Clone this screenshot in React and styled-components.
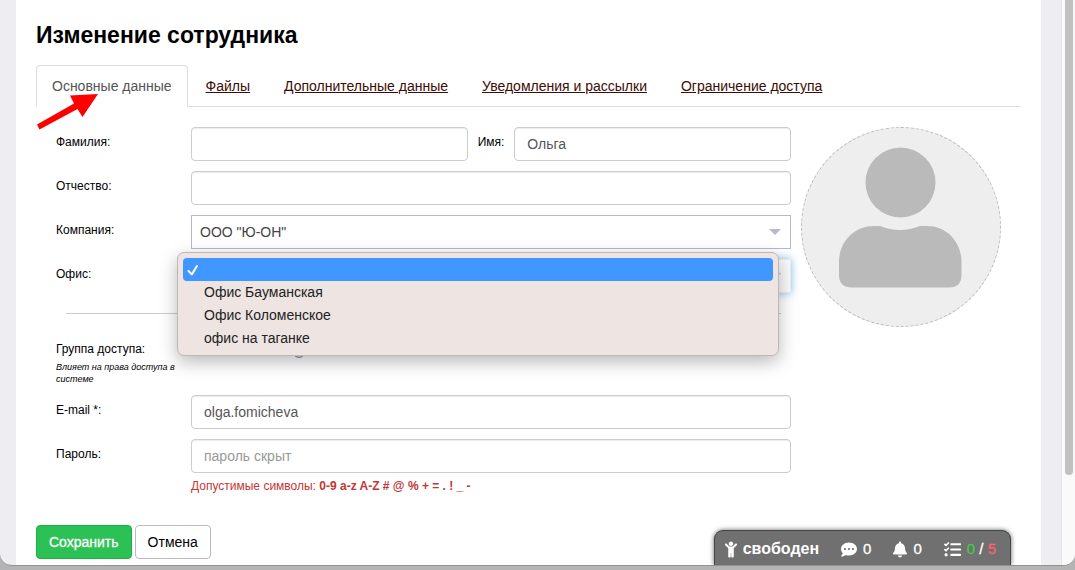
import React from 'react'
import styled, { createGlobalStyle } from 'styled-components'
import { FaChild, FaCommentDots, FaBell, FaTasks } from 'react-icons/fa'

const GlobalStyle = createGlobalStyle`
  * {
    box-sizing: border-box;
  }

  body {
    margin: 0;
    background: #b4b4b4;
    color: #000;
    font-family: "Liberation Sans", Arial, sans-serif;
    font-size: 14px;
    line-height: 20px;
  }

  button, input, select {
    font: inherit;
  }
`

const Desktop = styled.div`
  display: flex;
  min-height: 100vh;
  padding-bottom: 4px;
`

const Window = styled.div`
  position: relative;
  display: flex;
  flex: 1;
  overflow: hidden;
  border-bottom: 1px solid #929292;
  border-radius: 0 0 12px 12px;
  background: #eeedf2;
`

const Page = styled.main`
  flex: 1;
  min-width: 0;
  margin: 0 20px 0 16px;
  padding: 20px 20px 6px;
  background: #fff;
`

const ScrollTrack = styled.div`
  display: flex;
  width: 14px;
  padding-left: 3px;
  border-left: 1px solid #e4e4e6;
  background: #fafafa;
`

const ScrollThumb = styled.div`
  width: 8px;
  height: 84%;
  border-radius: 0 0 4px 4px;
  background: #c1c1c1;
`

const Title = styled.h1`
  margin: 0 0 15px;
  font-size: 23px;
  line-height: 30px;
`

const Tabs = styled.nav`
  display: flex;
  gap: 2px;
  border-bottom: 1px solid #ddd;
`

const Tab = styled.a`
  margin-bottom: -1px;
  padding: 10px 15px;
  border: 1px solid ${props => props.$active ? '#ddd' : 'transparent'};
  border-bottom-color: ${props => props.$active ? '#fff' : 'transparent'};
  border-radius: 4px 4px 0 0;
  color: ${props => props.$active ? '#555' : '#3c0d05'};
  text-decoration: ${props => props.$active ? 'none' : 'underline'};
`

const TabPointer = styled.svg`
  position: absolute;
  top: 90px;
  left: 36px;
  width: 64px;
  height: 40px;
  pointer-events: none;
`

const FormBody = styled.div`
  display: flex;
  align-items: flex-start;
  gap: 10px;
  padding: 20px 20px 0;
`

const Fields = styled.div`
  display: flex;
  flex: 1;
  flex-direction: column;
  gap: 10px;
  min-width: 0;
`

const Row = styled.div`
  display: grid;
  grid-template-columns: 120px 1fr;
  column-gap: 15px;
`

const Label = styled.label`
  padding-top: 5px;
  font-size: 12px;
`

const Control = styled.div`
  position: relative;
  display: flex;
  gap: 10px;
  min-width: 0;
`

const Input = styled.input`
  flex: 1;
  width: 100%;
  min-width: 0;
  height: 34px;
  padding: 6px 12px;
  border: 1px solid #ccc;
  border-radius: 4px;
  background: #fff;
  box-shadow: inset 0 1px 1px rgba(0, 0, 0, 0.075);
  color: #555;

  &::placeholder {
    color: #999;
    opacity: 1;
  }
`

const Select = styled.select`
  flex: 1;
  height: 34px;
  padding: 0 30px 0 8px;
  appearance: none;
  border: 1px solid ${props => props.$focused ? '#eee' : '#b9b7cb'};
  border-radius: 0;
  outline: 0;
  background: ${props => props.$focused ? '#fafafa' : '#fff'};
  box-shadow: ${props => props.$focused ? '0 0 8px rgba(102, 175, 233, 0.8)' : 'none'};
  color: #444;
`

const Caret = styled.svg`
  position: absolute;
  top: 14px;
  right: 10px;
  width: 12px;
  height: 6px;
  fill: #bcb9cd;
  pointer-events: none;
`

const Menu = styled.ul`
  position: absolute;
  z-index: 2;
  top: -7px;
  right: 12px;
  left: -14px;
  margin: 0;
  padding: 5px;
  list-style: none;
  border: 1px solid #bdb8b8;
  border-radius: 7px;
  background: #eee4e2;
  box-shadow: 0 6px 18px rgba(0, 0, 0, 0.28);
`

const MenuItem = styled.li`
  height: 23px;
  padding-left: 21px;
  border-radius: 4px;
  background: ${props => props.$selected ? '#4097ff' : 'transparent'};
  color: #222;
  line-height: 23px;
`

const CheckMark = styled.svg`
  display: block;
  width: 12px;
  height: 23px;
  margin-left: -17px;
`

const Divider = styled.hr`
  width: calc(100% - 20px);
  margin: 10px;
  border: 0;
  border-top: 1px solid #ccc;
`

const GroupLabel = styled.div`
  padding-top: 5px;
  font-size: 12px;
`

const Hint = styled.em`
  display: block;
  font-size: 9px;
  line-height: 12px;
  padding-top: 2px;
`

const HelpIcon = styled.svg`
  width: 14px;
  height: 14px;
  margin: 10px 0 0 101px;
`

const ErrorText = styled.p`
  grid-column: 2;
  margin: 3px 0 0;
  color: #c43535;
  font-size: 12px;
`

const Actions = styled.div`
  display: flex;
  gap: 3px;
  margin-top: 29px;
`

const Button = styled.button`
  height: 34px;
  padding: 0 12px;
  border: 1px solid ${props => props.$primary ? '#1fb148' : '#bbb'};
  border-radius: 4px;
  background: ${props => props.$primary ? '#2bc155' : '#fff'};
  color: ${props => props.$primary ? '#fff' : '#000'};
  -webkit-text-stroke: ${props => props.$primary ? '0.3px #fff' : '0'};
`

const Avatar = styled.div`
  flex: none;
  width: 200px;
  height: 200px;
  border: 1px dashed #b9b9b9;
  border-radius: 50%;
  background: #eee;

  svg {
    display: block;
  }
`

const StatusBar = styled.div`
  position: absolute;
  right: 64px;
  bottom: 0;
  display: flex;
  align-items: center;
  gap: 22px;
  height: 35px;
  padding: 2px 14px 0 10px;
  border: 1px solid #444;
  border-bottom: 0;
  border-radius: 9px 9px 0 0;
  background: #707070;
  box-shadow: 0 0 5px rgba(0, 0, 0, 0.6);
`

const StatusItem = styled.a`
  display: flex;
  align-items: center;
  gap: 6px;
  color: #fff;
  font-weight: ${props => props.$bold ? 'bold' : 'normal'};
  font-size: ${props => props.$bold ? '16px' : '15px'};
  text-decoration: none;

  svg {
    width: ${props => props.$icon}px;
    height: 17px;
  }

  b {
    font-weight: normal;
    -webkit-text-stroke: 0.3px currentColor;
  }
`

const Count = styled.span`
  color: ${props => props.color};
`

const tabs = [
  'Основные данные',
  'Файлы',
  'Дополнительные данные',
  'Уведомления и рассылки',
  'Ограничение доступа'
]

const offices = ['Офис Бауманская', 'Офис Коломенское', 'офис на таганке']

const SelectCaret = () => (
  <Caret viewBox="0 0 12 6" aria-hidden="true">
    <path d="M0 0h12L6 6z" />
  </Caret>
)

const OfficeMenu = () => (
  <Menu role="listbox" aria-labelledby="office-label">
    <MenuItem role="option" aria-selected="true" $selected>
      <CheckMark viewBox="0 0 12 23" fill="none" stroke="#fff" strokeWidth="2">
        <path d="M1.5 13L4.8 16.4L10 8" strokeLinecap="round" strokeLinejoin="round" />
      </CheckMark>
    </MenuItem>
    {offices.map(office => (
      <MenuItem key={office} role="option" aria-selected="false">{office}</MenuItem>
    ))}
  </Menu>
)

const EmployeePhoto = () => (
  <Avatar>
    <svg width="198" height="198" viewBox="0 0 198 198" fill="#bababa" aria-hidden="true">
      <circle cx="98.5" cy="54.5" r="35" />
      <path d="M37 134C37 114 52 98 72 98H78Q98 106 118 98H125C145 98 159.5 114 159.5 134V147Q159.5 159.5 147 159.5H50Q37 159.5 37 147Z" />
    </svg>
  </Avatar>
)

const Status = () => (
  <StatusBar>
    <StatusItem href="#" $icon={12} $bold><FaChild viewBox="0 0 384 512" />свободен</StatusItem>
    <StatusItem href="#" $icon={16}><FaCommentDots /><b>0</b></StatusItem>
    <StatusItem href="#" $icon={14}><FaBell /><b>0</b></StatusItem>
    <StatusItem href="#" $icon={17}>
      <FaTasks />
      <b><Count color="#45c94a">0</Count> / <Count color="#ff6170">5</Count></b>
    </StatusItem>
  </StatusBar>
)

const App = () => (
  <Desktop>
    <GlobalStyle />
    <Window>
      <Page>
        <Title>Изменение сотрудника</Title>
        <Tabs>
          {tabs.map((tab, i) => (
            <Tab key={tab} href="#" $active={i === 0}>{tab}</Tab>
          ))}
        </Tabs>
        <form>
          <FormBody>
            <Fields>
              <Row>
                <Label htmlFor="surname">Фамилия:</Label>
                <Control>
                  <Input id="surname" />
                  <Label htmlFor="name">Имя:</Label>
                  <Input id="name" defaultValue="Ольга" />
                </Control>
              </Row>
              <Row>
                <Label htmlFor="patronymic">Отчество:</Label>
                <Control><Input id="patronymic" /></Control>
              </Row>
              <Row>
                <Label htmlFor="company">Компания:</Label>
                <Control>
                  <Select id="company">
                    <option>ООО "Ю-ОН"</option>
                  </Select>
                  <SelectCaret />
                </Control>
              </Row>
              <Row>
                <Label id="office-label" htmlFor="office">Офис:</Label>
                <Control>
                  <Select id="office" $focused>
                    <option />
                  </Select>
                  <SelectCaret />
                  <OfficeMenu />
                </Control>
              </Row>
              <Divider />
              <Row>
                <GroupLabel>
                  Группа доступа:
                  <Hint>Влияет на права доступа в системе</Hint>
                </GroupLabel>
                <Control>
                  <HelpIcon viewBox="0 0 14 14" fill="none" stroke="#69698c" aria-hidden="true">
                    <circle cx="7" cy="7" r="6.3" />
                  </HelpIcon>
                </Control>
              </Row>
              <Row>
                <Label htmlFor="email">E-mail *:</Label>
                <Control><Input id="email" defaultValue="olga.fomicheva" /></Control>
              </Row>
              <Row>
                <Label htmlFor="password">Пароль:</Label>
                <Control><Input id="password" type="password" placeholder="пароль скрыт" /></Control>
                <ErrorText>Допустимые символы: <b>0-9 a-z A-Z # @ % + = . ! _ -</b></ErrorText>
              </Row>
            </Fields>
            <EmployeePhoto />
          </FormBody>
          <Actions>
            <Button type="submit" $primary>Сохранить</Button>
            <Button type="button">Отмена</Button>
          </Actions>
        </form>
      </Page>
      <ScrollTrack><ScrollThumb /></ScrollTrack>
      <TabPointer viewBox="0 0 64 40" fill="#f00" aria-hidden="true">
        <path d="M1 34.5L38 13.5L34 5.5L62 4L46.5 27L41.5 19L3.5 39.5Z" />
      </TabPointer>
      <Status />
    </Window>
  </Desktop>
)

export default App
